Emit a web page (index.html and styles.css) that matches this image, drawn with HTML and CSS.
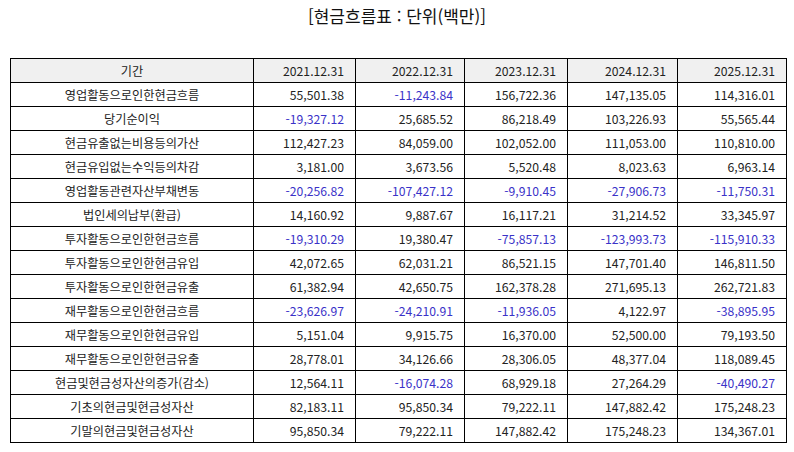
FILE: index.html
```html
<!DOCTYPE html>
<html lang="ko">
<head>
<meta charset="utf-8">
<link rel="stylesheet" href="styles.css">
</head>
<body>
<div class="page">
  <div class="title">[현금흐름표 : 단위(백만)]</div>
  <table class="cf">
    <colgroup>
      <col class="c-label"><col class="c1"><col class="c2"><col class="c3"><col class="c4"><col class="c5">
    </colgroup>
    <thead>
      <tr><th class="lbl">기간</th><th>2021.12.31</th><th>2022.12.31</th><th>2023.12.31</th><th>2024.12.31</th><th>2025.12.31</th></tr>
    </thead>
    <tbody>
      <tr><td class="lbl">영업활동으로인한현금흐름</td><td>55,501.38</td><td class="neg">-11,243.84</td><td>156,722.36</td><td>147,135.05</td><td>114,316.01</td></tr>
      <tr><td class="lbl">당기순이익</td><td class="neg">-19,327.12</td><td>25,685.52</td><td>86,218.49</td><td>103,226.93</td><td>55,565.44</td></tr>
      <tr><td class="lbl">현금유출없는비용등의가산</td><td>112,427.23</td><td>84,059.00</td><td>102,052.00</td><td>111,053.00</td><td>110,810.00</td></tr>
      <tr><td class="lbl">현금유입없는수익등의차감</td><td>3,181.00</td><td>3,673.56</td><td>5,520.48</td><td>8,023.63</td><td>6,963.14</td></tr>
      <tr><td class="lbl">영업활동관련자산부채변동</td><td class="neg">-20,256.82</td><td class="neg">-107,427.12</td><td class="neg">-9,910.45</td><td class="neg">-27,906.73</td><td class="neg">-11,750.31</td></tr>
      <tr><td class="lbl">법인세의납부(환급)</td><td>14,160.92</td><td>9,887.67</td><td>16,117.21</td><td>31,214.52</td><td>33,345.97</td></tr>
      <tr><td class="lbl">투자활동으로인한현금흐름</td><td class="neg">-19,310.29</td><td>19,380.47</td><td class="neg">-75,857.13</td><td class="neg">-123,993.73</td><td class="neg">-115,910.33</td></tr>
      <tr><td class="lbl">투자활동으로인한현금유입</td><td>42,072.65</td><td>62,031.21</td><td>86,521.15</td><td>147,701.40</td><td>146,811.50</td></tr>
      <tr><td class="lbl">투자활동으로인한현금유출</td><td>61,382.94</td><td>42,650.75</td><td>162,378.28</td><td>271,695.13</td><td>262,721.83</td></tr>
      <tr><td class="lbl">재무활동으로인한현금흐름</td><td class="neg">-23,626.97</td><td class="neg">-24,210.91</td><td class="neg">-11,936.05</td><td>4,122.97</td><td class="neg">-38,895.95</td></tr>
      <tr><td class="lbl">재무활동으로인한현금유입</td><td>5,151.04</td><td>9,915.75</td><td>16,370.00</td><td>52,500.00</td><td>79,193.50</td></tr>
      <tr><td class="lbl">재무활동으로인한현금유출</td><td>28,778.01</td><td>34,126.66</td><td>28,306.05</td><td>48,377.04</td><td>118,089.45</td></tr>
      <tr><td class="lbl">현금및현금성자산의증가(감소)</td><td>12,564.11</td><td class="neg">-16,074.28</td><td>68,929.18</td><td>27,264.29</td><td class="neg">-40,490.27</td></tr>
      <tr><td class="lbl">기초의현금및현금성자산</td><td>82,183.11</td><td>95,850.34</td><td>79,222.11</td><td>147,882.42</td><td>175,248.23</td></tr>
      <tr><td class="lbl">기말의현금및현금성자산</td><td>95,850.34</td><td>79,222.11</td><td>147,882.42</td><td>175,248.23</td><td>134,367.01</td></tr>
    </tbody>
  </table>
</div>
</body>
</html>
```

FILE: styles.css
```css
html, body {
  margin: 0;
  padding: 0;
  background: #ffffff;
}
.page {
  width: 794px;
  height: 452px;
  font-family: "Noto Sans CJK KR", "Noto Sans", "DejaVu Sans", sans-serif;
  color: #1a1a1a;
}
.title {
  height: 32px;
  line-height: 32px;
  text-align: center;
  font-size: 17px;
  color: #111;
  letter-spacing: 0;
}
.cf {
  margin: 26px 0 0 10px;
  border-collapse: collapse;
  table-layout: fixed;
  width: 776px;
  font-size: 12.2px;
}
.c-label { width: 243px; }
.c1 { width: 102px; }
.c2 { width: 109px; }
.c3 { width: 103px; }
.c4 { width: 110px; }
.c5 { width: 109px; }
.cf tr { height: 24px; }
.cf th, .cf td {
  border: 1px solid #000;
  padding: 0 11px 0 4px;
  text-align: right;
  font-weight: normal;
  line-height: 22px;
  white-space: nowrap;
  color: #222;
}
.cf th {
  background: #f0f0f0;
}
.cf .lbl {
  text-align: center;
  padding: 0 4px;
}
.cf td.neg {
  color: #3a32c8;
}
```
